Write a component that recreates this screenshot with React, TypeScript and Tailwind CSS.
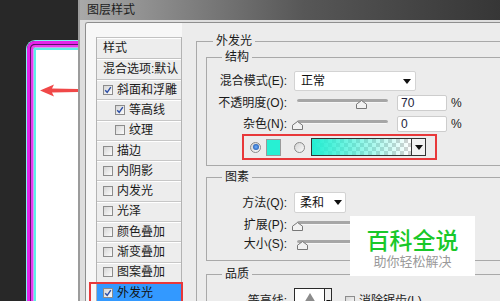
import React from 'react';

const FONT = "font-['Liberation_Sans','Noto_Sans_CJK_SC',sans-serif]";

function CheckBox({ checked }: { checked?: boolean }) {
  return (
    <span className="flex h-[10px] w-[10px] shrink-0 items-center justify-center border border-[#8c8c8c] bg-linear-to-br from-[#d6d6d6] to-[#fbfbfb]">
      {checked && (
        <svg width="8" height="8" viewBox="0 0 8 8">
          <path d="M1.2 4.2 L3.2 6.3 L6.8 1.2" fill="none" stroke="#2c4ea6" strokeWidth="1.4" />
        </svg>
      )}
    </span>
  );
}

function Radio({ on }: { on?: boolean }) {
  return (
    <span className="flex h-[11px] w-[11px] shrink-0 items-center justify-center rounded-full border border-[#8a8a8a] bg-linear-to-br from-[#d4d4d4] to-[#fafafa]">
      {on && <span className="h-[6px] w-[6px] rounded-full bg-radial from-[#6fb0ff] to-[#10489e]" />}
    </span>
  );
}

function DownArrow() {
  return (
    <svg width="8" height="5" viewBox="0 0 8 5">
      <path d="M0 0 L8 0 L4 5 Z" fill="#111" />
    </svg>
  );
}

function Slider({ pos }: { pos: number }) {
  return (
    <div className="relative ml-[10px] h-[16px] w-[91px] shrink-0">
      <div className="mt-[4px] h-[4px] w-full rounded-full border-b border-[#f6f6f6] bg-[#a6a6a6]" />
      {/* thumb */}
      <svg className="absolute top-[5px]" style={{ left: pos - 6 }} width="11" height="9" viewBox="0 0 11 9">
        <path d="M5.5 0.5 L10.5 4.2 L10.5 8.5 L0.5 8.5 L0.5 4.2 Z" fill="#f2f2f2" stroke="#777" />
      </svg>
    </div>
  );
}

function NumInput({ value }: { value: string }) {
  return (
    <div className="ml-[9px] flex h-[16px] w-[50px] shrink-0 items-center rounded-[2px] border border-[#cdcdcd] bg-white pl-[3px] text-[12px] leading-[14px] text-[#1c1c3a]">
      {value}
    </div>
  );
}

function Label({ children }: { children: React.ReactNode }) {
  return <div className="w-[80px] shrink-0 text-right text-[12px] leading-[16px] text-[#1a1a1a]">{children}</div>;
}

function StyleRow({ label, checked, indent }: { label: string; checked?: boolean; indent?: boolean }) {
  return (
    <div
      className={
        indent
          ? 'flex h-[20.3px] items-center gap-[4px] border-b border-[#c7c7c7] pl-[18px] shadow-[inset_0_1px_0_#ffffff]'
          : 'flex h-[20.3px] items-center gap-[4px] border-b border-[#c7c7c7] pl-[6px] shadow-[inset_0_1px_0_#ffffff]'
      }
    >
      <CheckBox checked={checked} />
      <span className="text-[12px] leading-[14px] text-[#1a1a1a]">{label}</span>
    </div>
  );
}

const rows = [
  { label: '斜面和浮雕', checked: true },
  { label: '等高线', checked: true, indent: true },
  { label: '纹理', indent: true },
  { label: '描边' },
  { label: '内阴影' },
  { label: '内发光' },
  { label: '光泽' },
  { label: '颜色叠加' },
  { label: '渐变叠加' },
  { label: '图案叠加' },
];

export default function App() {
  return (
    <div className={`relative flex h-[301px] w-[500px] overflow-hidden bg-[#282828] ${FONT}`}>
      {/* Canvas with framed layer */}
      <div className="flex w-[78px] shrink-0 flex-col">
        <div className="ml-[26px] mt-[40px] flex flex-1 rounded-tl-[9px] border-l border-t border-[#7ef3ec]">
          <div className="flex flex-1 rounded-tl-[8px] border-l-[3px] border-t-[3px] border-[#e424ea]">
            <div className="flex flex-1 rounded-tl-[5px] border-l border-t border-[#5e0f6e]">
              <div className="flex flex-1 rounded-tl-[4px] border-l-2 border-t-2 border-[#ea3aec]">
                <div className="flex flex-1 rounded-tl-[2px] border-l border-t border-[#c9a6f2]">
                  <div className="flex-1 border-l-2 border-t-2 border-[#5ef0e4] bg-white pl-[4px] pt-[34px]">
                    <svg width="38" height="13" viewBox="0 0 38 13">
                      <path d="M0 6.5 L14 0.5 L12 4.6 L38 5 L38 8 L12 8.4 L14 12.5 Z" fill="#f04848" />
                    </svg>
                  </div>
                </div>
              </div>
            </div>
          </div>
        </div>
      </div>

      {/* Dialog */}
      <div className="flex flex-1 flex-col border-l-2 border-[#9c9c9c] bg-[#dedede]">
        <div className="flex h-[20px] shrink-0 items-center bg-linear-to-r from-[#a9a9a9] via-[#575757] to-[#323232] pl-[7px]">
          <span className="text-[12px] leading-[14px] text-[#1c1c1c]">图层样式</span>
        </div>

        <div className="ml-[5px] mt-[2px] flex flex-1 overflow-hidden rounded-tl-[3px] border-l border-t border-[#8e8e8e]">
          {/* Style list */}
          <div className="w-[96px] shrink-0 bg-[#f7f7f7] pl-[10px] pt-[14px]">
            <div className="h-full w-[86px] border-x border-[#b3b3b3] bg-[#ededed]">
              <div className="flex h-[22px] items-center border-y border-[#c2c2c2] pl-[6px] text-[12px] leading-[14px] text-[#1a1a1a] shadow-[inset_0_1px_0_#ffffff]">
                样式
              </div>
              <div className="flex h-[21px] items-center border-b border-[#c2c2c2] pl-[6px] text-[12px] leading-[14px] text-[#1a1a1a] shadow-[inset_0_1px_0_#ffffff]">
                混合选项:默认
              </div>
              {rows.map((r) => (
                <StyleRow key={r.label} label={r.label} checked={r.checked} indent={r.indent} />
              ))}
              <div className="relative flex h-[20px] items-center gap-[4px] bg-[#3399ff] pl-[6px]">
                <CheckBox checked />
                <span className="text-[12px] leading-[14px] text-[#111]">外发光</span>
                <div className="absolute -left-[8px] -right-[2px] -top-[1px] h-[24px] border-2 border-[#e8383a]" />
              </div>
            </div>
          </div>

          {/* Settings */}
          <div className="flex-1 overflow-hidden bg-[#ececec] pl-[14px]">
            <fieldset className="mt-[10px] w-[330px] border border-[#a9a9a9]">
              <legend className="ml-[16px] px-[3px] text-[12px] leading-[16px] text-[#1a1a1a]">外发光</legend>
              <div className="flex flex-col pl-[9px]">
                {/* 结构 */}
                <fieldset className="w-[320px] border border-[#a9a9a9]">
                  <legend className="ml-[15px] px-[3px] text-[12px] leading-[16px] text-[#1a1a1a]">结构</legend>
                  <div className="flex flex-col pb-[5px] pt-[6px]">
                    <div className="flex h-[20px] items-center">
                      <Label>混合模式(E):</Label>
                      <div className="ml-[7px] flex h-[20px] w-[122px] items-center justify-between rounded-[2px] border border-[#d3d3d3] bg-white pl-[6px] pr-[4px]">
                        <span className="text-[12px] leading-[14px] text-[#111]">正常</span>
                        <DownArrow />
                      </div>
                    </div>
                    <div className="mt-[4px] flex h-[16px] items-center">
                      <Label>不透明度(O):</Label>
                      <Slider pos={65} />
                      <NumInput value="70" />
                      <span className="ml-[4px] text-[12px] leading-[14px] text-[#1a1a1a]">%</span>
                    </div>
                    <div className="mt-[5px] flex h-[16px] items-center">
                      <Label>杂色(N):</Label>
                      <Slider pos={1} />
                      <NumInput value="0" />
                      <span className="ml-[4px] text-[12px] leading-[14px] text-[#1a1a1a]">%</span>
                    </div>
                    <div className="ml-[35px] mt-[2px] flex h-[26px] w-[195px] items-center border-2 border-[#e8383a] pl-[6px]">
                      <Radio on />
                      <span className="ml-[5px] h-[17px] w-[15px] border border-[#9a9a9a] bg-[#27f0d3]" />
                      <span className="ml-[13px]">
                        <Radio />
                      </span>
                      <div className="ml-[6px] flex h-[18px] w-[115px] border border-[#333]">
                        <div className="flex-1 bg-[image:linear-gradient(to_right,#22efd2,rgba(34,239,210,0)),repeating-conic-gradient(#d2d2d2_0_25%,#ffffff_0_50%)] bg-[length:100%_100%,8px_8px]" />
                        <div className="flex w-[14px] items-center justify-center border-l border-[#333] bg-[#f2f2f2]">
                          <DownArrow />
                        </div>
                      </div>
                    </div>
                  </div>
                </fieldset>

                {/* 图素 */}
                <fieldset className="mt-[3px] w-[320px] border border-[#a9a9a9]">
                  <legend className="ml-[15px] px-[3px] text-[12px] leading-[16px] text-[#1a1a1a]">图素</legend>
                  <div className="flex flex-col pb-[8px] pt-[7px]">
                    <div className="flex h-[21px] items-center">
                      <Label>方法(Q):</Label>
                      <div className="ml-[7px] flex h-[21px] w-[52px] items-center justify-between rounded-[2px] border border-[#d3d3d3] bg-white pl-[5px] pr-[3px]">
                        <span className="text-[12px] leading-[14px] text-[#111]">柔和</span>
                        <DownArrow />
                      </div>
                    </div>
                    <div className="mt-[4px] flex h-[16px] items-center">
                      <Label>扩展(P):</Label>
                      <Slider pos={1} />
                    </div>
                    <div className="mt-[3px] flex h-[16px] items-center">
                      <Label>大小(S):</Label>
                      <Slider pos={6} />
                    </div>
                  </div>
                </fieldset>

                {/* 品质 */}
                <fieldset className="mt-[5px] w-[320px] border border-[#a9a9a9]">
                  <legend className="ml-[15px] px-[3px] text-[12px] leading-[16px] text-[#1a1a1a]">品质</legend>
                  <div className="flex flex-col pt-[6px]">
                    <div className="flex h-[26px] items-center">
                      <Label>等高线:</Label>
                      <div className="ml-[7px] flex h-[26px] w-[38px] border border-[#2a2a2a] bg-white">
                        <div className="flex flex-1 items-end justify-center">
                          <svg width="28" height="22" viewBox="0 0 28 22">
                            <path d="M2 22 L14 2 L26 22 Z" fill="#8c8c8c" />
                          </svg>
                        </div>
                        <div className="flex w-[7px] items-center justify-center border-l border-[#2a2a2a] bg-[#f0f0f0]">
                          <svg width="5" height="3" viewBox="0 0 5 3">
                            <path d="M0 0 L5 0 L2.5 3 Z" fill="#111" />
                          </svg>
                        </div>
                      </div>
                      <span className="ml-[13px]">
                        <CheckBox />
                      </span>
                      <span className="ml-[4px] text-[12px] leading-[14px] text-[#1a1a1a]">消除锯齿(L)</span>
                    </div>
                  </div>
                </fieldset>
              </div>
            </fieldset>
          </div>
        </div>
      </div>

      {/* Watermark */}
      <div className="absolute left-[350px] top-[216px] flex h-[60px] w-[125px] flex-col items-center bg-white pt-[12px]">
        <span className="text-[23px] font-medium leading-[26px] text-[#19c829]">百科全说</span>
        <span className="text-[13px] leading-[16px] text-[#9a9a9a]">助你轻松解决</span>
      </div>
    </div>
  );
}
